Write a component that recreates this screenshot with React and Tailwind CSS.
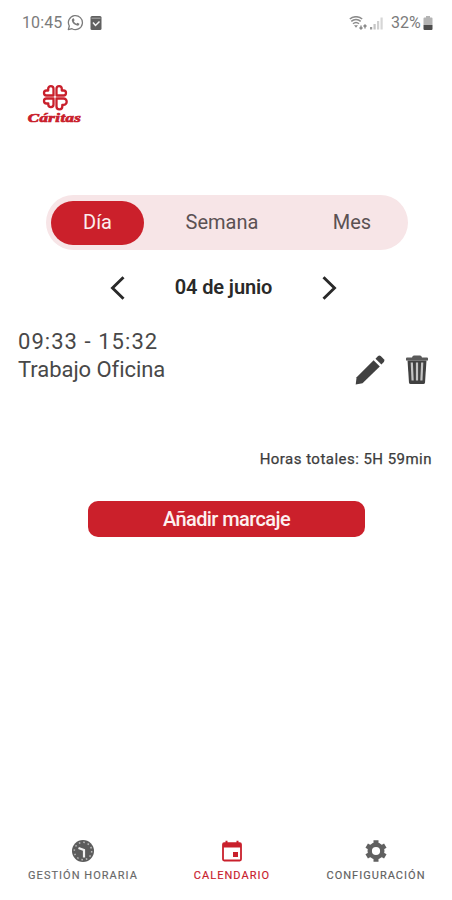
import { useState } from 'react'

const PERIODS = [
  { id: 'dia', label: 'Día', className: 'w-[93px]' },
  { id: 'semana', label: 'Semana', className: 'w-[156px]' },
  { id: 'mes', label: 'Mes', className: 'w-[104px]' },
]

function StatusBar() {
  return (
    <header className="h-[44px] pt-[1px] pl-[22px] pr-[19px] flex items-center text-[#7b7b7b] text-[16px] leading-none">
      <span className="w-[42px] pt-[1px] tracking-[0.1px]">10:45</span>
      <svg className="ml-[3px] w-[17px] h-[17px]" viewBox="0 0 17 17" fill="none" stroke="currentColor">
        <path d="M1.3 15.7l1-3.7A7 7 0 1 1 5 14.7z" strokeWidth="1.3" strokeLinejoin="round" />
        <path d="M5.7 4.4l1.1-.1.8 2-.8.9c.6 1.2 1.4 2 2.7 2.6l.9-1 2 .9c-.1 1.5-1.1 2.2-2.4 1.9C7.2 11 5.2 8.8 4.8 6.5c-.1-.8.2-1.6.9-2.1z" fill="currentColor" stroke="none" />
      </svg>
      <svg className="ml-[6px] w-[12px] h-[14px]" viewBox="0 0 12 14" fill="none">
        <rect x="0.5" y="0" width="11" height="14" rx="1.5" fill="#606060" />
        <path d="M1.5 2.2h9" stroke="#a8a8a8" />
        <path d="M3 6.5l2.5 3 4-4" stroke="#f5f5f5" strokeWidth="1.5" />
      </svg>

      <svg className="ml-auto w-[19px] h-[14px]" viewBox="0 0 19 14" fill="none" stroke="#8b8b8b">
        <path d="M.8 3a9.5 9.5 0 0 1 12.4 0M2.3 5.4a7 7 0 0 1 9.4 0M4 7.8a4.5 4.5 0 0 1 6 0" strokeWidth="1.5" />
        <path d="M5 9.3h4L7 11.8z" fill="#8b8b8b" stroke="none" />
        <path d="M12 13V9.5M10.5 11.5L12 13l1.5-1.5M16 12.5V9M14.5 10.5L16 9l1.5 1.5" strokeWidth="1.4" />
      </svg>
      <svg className="ml-[2px] w-[14px] h-[14px]" viewBox="0 0 14 14">
        <rect x="0" y="11" width="2.2" height="2.5" fill="#999" />
        <rect x="3.5" y="8" width="2.2" height="5.5" fill="#c4c4c4" />
        <rect x="7" y="5" width="2.2" height="8.5" fill="#d0d0d0" />
        <rect x="10.5" y="1.5" width="2.2" height="12" fill="#d6d6d6" />
      </svg>
      <span className="ml-[7px] w-[32px] pt-[1px]">32%</span>
      <svg className="w-[10px] h-[14px]" viewBox="0 0 10 14">
        <path d="M3 0h4v1.5h1.5q1 0 1 1V9H.5V2.5q0-1 1-1H3z" fill="#b4b4b4" />
        <path d="M.5 9h9v4q0 1-1 1h-7q-1 0-1-1z" fill="#4d4d4d" />
      </svg>
    </header>
  )
}

function Logo() {
  return (
    <div className="mt-[40px] ml-[26px] w-[57px] flex flex-col items-center text-[#c9202c]">
      <svg className="w-[26px] h-[27px]" viewBox="0 0 26 27" fill="none" stroke="currentColor" strokeWidth="2.3" strokeLinejoin="round">
        <path d="M11.5 11.5H4.5a2.5 2.5 0 0 1 0-5H6.2V4.8a2.65 2.65 0 0 1 5.3 0z" />
        <path d="M14.5 11.5V4.8a2.65 2.65 0 0 1 5.3 0v1.7h1.7a2.5 2.5 0 0 1 0 5z" />
        <path d="M11.5 14.5v6a2.6 2.6 0 0 1-5.2 0v-1H4.5a2.5 2.5 0 0 1 0-5z" />
        <path d="M14.5 14.5h7a3.2 3.2 0 0 1 0 6.4h-1.2v1.6a2.9 2.9 0 0 1-5.8 0z" />
      </svg>
      <span className="h-[13px] font-['Liberation_Serif',serif] font-bold italic text-[13px] leading-[13px] tracking-[0.3px] scale-x-[1.3] [-webkit-text-stroke:0.7px_currentColor]">
        Cáritas
      </span>
    </div>
  )
}

function PeriodTabs() {
  const [active, setActive] = useState('dia')

  return (
    <div className="mt-[71px] ml-[46px] w-[362px] h-[55px] rounded-full bg-[#f7e5e7] pl-[5px] flex items-center">
      {PERIODS.map(p => (
        <button
          key={p.id}
          onClick={() => setActive(p.id)}
          className={`h-[44px] pb-[2px] rounded-full text-[20px] ${p.className} ${active === p.id ? 'bg-[#cb202b] text-[#fbeeee]' : 'text-[#5b5153]'}`}>
          {p.label}
        </button>
      ))}
    </div>
  )
}

function DateNav() {
  return (
    <div className="mt-[22px] mx-[110px] h-[32px] w-[227px] flex items-center justify-between text-[#292929]">
      <button aria-label="Anterior">
        <svg className="w-[15px] h-[24px]" viewBox="0 0 15 24" fill="none" stroke="currentColor" strokeWidth="2.9">
          <path d="M13.5 1.2L2.5 12l11 10.8" />
        </svg>
      </button>
      <span className="pb-[2px] text-[20px] font-semibold tracking-[-0.1px]">04 de junio</span>
      <button aria-label="Siguiente">
        <svg className="w-[15px] h-[24px]" viewBox="0 0 15 24" fill="none" stroke="currentColor" strokeWidth="2.9">
          <path d="M1.5 1.2l11 10.8-11 10.8" />
        </svg>
      </button>
    </div>
  )
}

function Entry() {
  return (
    <div className="mt-[23px] pl-[18px] pr-[24px] flex justify-between text-[#484848]">
      <div className="pt-[1px] text-[22px] leading-[28px]">
        <p className="tracking-[1.05px]">09:33 - 15:32</p>
        <p className="tracking-[-0.05px]">Trabajo Oficina</p>
      </div>
      <div className="pt-[28px] h-[58px] flex gap-[21px] text-[#414141]">
        <button aria-label="Editar" className="h-[30px]">
          <svg className="w-[30px] h-[30px]" viewBox="0 0 30 30" fill="currentColor">
            <path d="M18.6 5.2l6.2 6.2L7.5 28.3.7 29.4l.9-7.2z" />
            <path d="M20.5 3.7l2.6-2.6q1.3-1.1 2.6 0l3.2 3.2q1.1 1.3 0 2.6l-2.5 2.6z" />
          </svg>
        </button>
        <button aria-label="Eliminar" className="h-[30px]">
          <svg className="w-[22px] h-[30px]" viewBox="0 0 22 30">
            <path d="M6 2.5Q6.5.5 8 .5h6q1.5 0 2 2h5q1 0 1 1v2H0v-2q0-1 1-1z" fill="#5a5a5a" />
            <path d="M1.5 5.5h19l-1.5 22q-.2 1.5-1.5 1.5h-13Q3.2 29 3 27.5z" fill="currentColor" />
            <path d="M5.8 7.5l.8 18M11 7.5v18M16.2 7.5l-.8 18" stroke="#c4c4c4" strokeWidth="2.2" />
          </svg>
        </button>
      </div>
    </div>
  )
}

// Clock face used by the first tab
function ClockIcon() {
  return (
    <svg className="w-[22px] h-[22px]" viewBox="0 0 22 22" fill="none">
      <circle cx="11" cy="11" r="11" fill="#5c5c5c" />
      <circle cx="11" cy="11" r="8.7" stroke="#b8b8b8" strokeWidth="1.5" strokeDasharray="1.6 2.955" />
      <path d="M6.5 8l5.5 2v7.5" stroke="#f2f2f2" strokeWidth="2.2" />
    </svg>
  )
}

function CalendarIcon() {
  return (
    <svg className="w-[22px] h-[22px]" viewBox="0 0 22 22" fill="none">
      <path d="M5.5 0.8v3M16.5 0.8v3" stroke="currentColor" strokeWidth="2" />
      <rect x="2" y="3.2" width="18" height="17.3" rx="1.2" stroke="currentColor" strokeWidth="1.8" />
      <path d="M2 3h18v4.5H2z" fill="currentColor" />
      <path d="M12 12h5v5h-5z" fill="currentColor" />
    </svg>
  )
}

function GearIcon() {
  return (
    <svg className="w-[22px] h-[22px]" viewBox="0 0 22 22" fill="none" stroke="currentColor">
      <circle cx="11" cy="11" r="6.3" strokeWidth="4.4" />
      <path d="M11 0.2v4M11 17.8v4M1.7 5.65l3.5 2M16.8 14.35l3.5 2M1.7 16.35l3.5-2M16.8 7.65l3.5-2" strokeWidth="5" />
    </svg>
  )
}

const NAV = [
  { label: 'GESTIÓN HORARIA', icon: <ClockIcon />, className: 'w-[110px] text-[#686868]' },
  { label: 'CALENDARIO', icon: <CalendarIcon />, className: 'w-[78px] text-[#c9202c]' },
  { label: 'CONFIGURACIÓN', icon: <GearIcon />, className: 'w-[100px] text-[#606060]' },
]

function BottomNav() {
  return (
    <nav className="mt-auto h-[64px] pl-[28px] pr-[26px] flex justify-between">
      {NAV.map(item => (
        <a key={item.label} className={`flex flex-col items-center ${item.className}`}>
          <span className="h-[30px] flex items-center">{item.icon}</span>
          <span className="mt-[3px] text-[11px] leading-[13px] tracking-[1.03px] whitespace-nowrap [-webkit-text-stroke:0.15px_currentColor]">
            {item.label}
          </span>
        </a>
      ))}
    </nav>
  )
}

export default function App() {
  return (
    <div className="w-[452px] h-[900px] bg-white flex flex-col overflow-hidden font-[Roboto,sans-serif]">
      <StatusBar />
      <Logo />
      <PeriodTabs />
      <DateNav />
      <Entry />
      <p className="mt-[64px] pr-[20px] text-right text-[15px] leading-[20px] tracking-[0.47px] text-[#3c3c3c] [-webkit-text-stroke:0.25px_currentColor]">
        Horas totales: 5H 59min
      </p>
      <button className="mt-[32px] ml-[88px] w-[277px] h-[36px] pb-[1px] rounded-[10px] bg-[#cb202b] text-[#fdf0f0] text-[20px] font-medium tracking-[-0.6px]">
        Añadir marcaje
      </button>
      <BottomNav />
    </div>
  )
}
